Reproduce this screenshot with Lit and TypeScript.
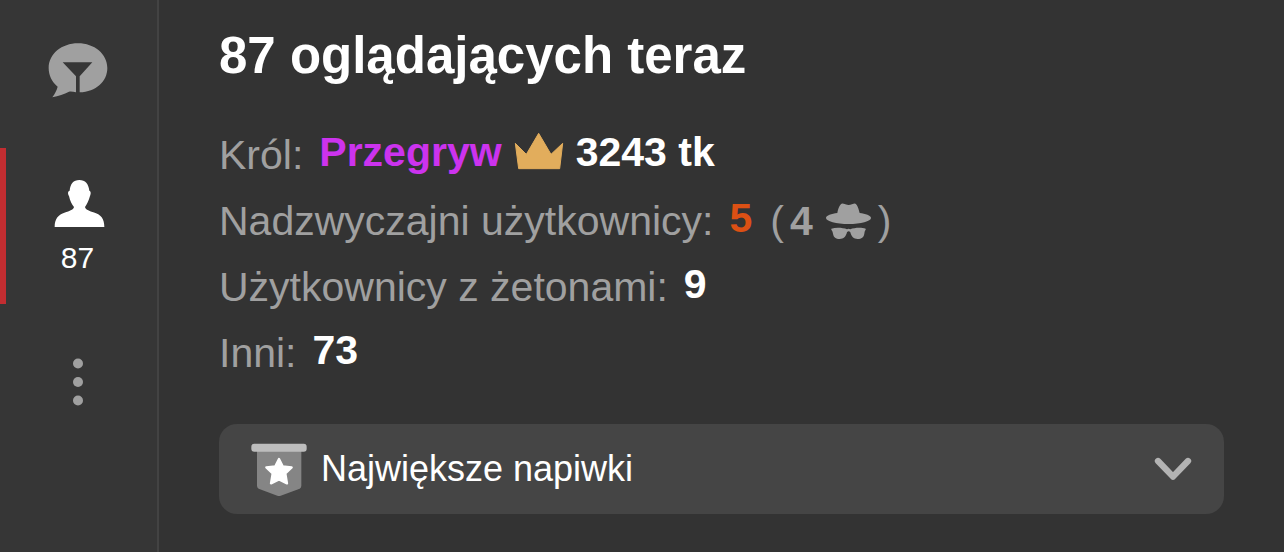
import { LitElement, html, css, svg } from "lit";
import { customElement, property } from "lit/decorators.js";

const chatIcon = html`<svg width="60" height="55" viewBox="144 68 180 165" aria-hidden="true">
  <path fill="#a0a0a0" d="M234 69C283 69 322 101 322 143C322 183 288 215 239 216V168L277 126H188L228 168V216C220 214 213 213 207 214C192 221 176 227 157 231C165 220 170 210 173 199C155 184 146 165 146 143C146 101 185 69 234 69Z"/>
</svg>`;

const personIcon = html`<svg width="54" height="49" viewBox="153 117 162 147" aria-hidden="true">
  <path fill="#fff" d="M238 120C256 120 266 132 268 152C273 153 273 161 270 168C266 184 260 193 255 201C257 209 266 212 280 217C303 224 313 236 313 261H164C164 236 175 224 197 217C211 212 220 209 222 201C216 193 210 184 207 168C203 161 203 153 209 152C211 132 220 120 238 120Z"/>
</svg>`;

const dotsIcon = html`<svg width="10" height="48" viewBox="0 0 10 48" aria-hidden="true">
  <g fill="#a0a0a0">${[5.5, 24, 42.5].map((y) => svg`<circle cx="5" cy=${y} r="5"/>`)}</g>
</svg>`;

const crownIcon = html`<svg class="crown" width="50" height="38" viewBox="36 36 150 114" role="img" aria-label="Korona">
  <path fill="#e2ad5c" stroke="#e2ad5c" stroke-width="3" stroke-linejoin="round" d="M40 70L73 103L110 40L147 103L182 70L173 146H50Z"/>
</svg>`;

const incognitoIcon = html`<svg width="47" height="39" viewBox="312 36 141 117" aria-hidden="true">
  <g fill="#a0a0a0">
    <path d="M362 41C368 40 376 45 383 45C390 45 398 40 403 41C409 43 413 57 416 69C433 71 450 76 450 84C450 94 419 102 383 102C346 102 315 94 315 84C315 76 332 71 349 69C351 57 356 43 362 41Z"/>
    <path d="M331 116C345 112 366 113 378 118Q383 115 388 118C400 113 421 112 434 116V120C431 122 431 126 430 131C428 142 422 147 410 147C398 147 391 140 388 127Q383 121 378 127C375 140 368 147 356 147C344 147 338 142 336 131C335 126 334 122 331 120Z"/>
  </g>
</svg>`;

const badgeIcon = html`<svg width="56" height="56" viewBox="123 78 168 168" aria-hidden="true">
  <path fill="#858585" d="M141 106H274V212Q274 218 269 221L212 242Q207 244 202 242L146 221Q141 218 141 212Z"/>
  <rect x="124" y="86" width="166" height="24" rx="9" fill="#bdbdbd"/>
  <path fill="#fff" stroke="#fff" stroke-width="7" stroke-linejoin="round" d="M207 132L218 154L245 157L226 175L231 205L207 193L183 205L188 175L169 157L196 154Z"/>
</svg>`;

const chevronIcon = html`<svg width="38" height="24" viewBox="102 126 114 72" aria-hidden="true">
  <path fill="none" stroke="#b3b3b3" stroke-width="19" stroke-linecap="round" stroke-linejoin="round" d="M114 138L159 185L204 138"/>
</svg>`;

@customElement("side-nav")
class SideNav extends LitElement {
  @property({ type: Number }) viewers = 0;

  static styles = css`
    :host {
      display: block;
      background: #363636;
      border-right: 2px solid #434343;
    }
    .nav {
      display: flex;
      flex-direction: column;
    }
    .item {
      display: flex;
      flex-direction: column;
      align-items: center;
      justify-content: center;
      gap: 12px;
      height: 156px;
      padding: 0 8px 0 6px;
      border: 0;
      background: none;
      color: #fff;
      font: 30px/36px "Liberation Sans", Arial, sans-serif;
      cursor: pointer;
    }
    .first {
      height: 148px;
      padding-bottom: 8px;
    }
    .active {
      border-left: 6px solid #c22d31;
      padding-top: 2px;
      padding-left: 0;
    }
  `;

  render() {
    return html`<nav class="nav">
      <button class="item first" aria-label="Czat">${chatIcon}</button>
      <button class="item active" aria-label="Oglądający: ${this.viewers}">${personIcon}<span>${this.viewers}</span></button>
      <button class="item" aria-label="Więcej">${dotsIcon}</button>
    </nav>`;
  }
}

@customElement("app-root")
class AppRoot extends LitElement {
  static styles = css`
    :host {
      display: grid;
      grid-template-columns: 159px 1fr;
      min-height: 100vh;
      background: #333;
      color: #fff;
      font-family: "Liberation Sans", Arial, sans-serif;
    }
    .main {
      padding: 24px 60px;
    }
    .title {
      margin: 0 0 34px;
      font-size: 51px;
      line-height: 64px;
      font-weight: 700;
    }
    .stats {
      margin: 0;
    }
    .row {
      display: flex;
      align-items: center;
      gap: 16px;
      height: 66px;
      font-size: 41px;
      color: #a0a0a0;
      white-space: nowrap;
    }
    .value {
      display: flex;
      align-items: center;
      gap: 12px;
      margin: 0;
    }
    .wide {
      gap: 18px;
    }
    .strong {
      padding-bottom: 6px;
      font-weight: 700;
      color: #fff;
    }
    .crown {
      padding-bottom: 8px;
    }
    .king {
      color: #cc33ee;
    }
    .special {
      color: #dc5014;
    }
    .hidden {
      display: flex;
      align-items: center;
      gap: 6px;
    }
    .count {
      display: flex;
      align-items: center;
      gap: 12px;
    }
    .tips {
      display: flex;
      align-items: center;
      gap: 14px;
      width: 100%;
      height: 90px;
      margin-top: 38px;
      padding: 0 32px;
      border: 0;
      border-radius: 18px;
      background: #454545;
      color: #fff;
      font: 36px/44px "Liberation Sans", Arial, sans-serif;
      text-align: left;
      cursor: pointer;
    }
    .grow {
      flex: 1;
    }
  `;

  render() {
    return html`
      <side-nav .viewers=${87}></side-nav>
      <main class="main">
        <h1 class="title">87 oglądających teraz</h1>
        <dl class="stats">
          <div class="row">
            <dt>Król:</dt>
            <dd class="value"><span class="strong king">Przegryw</span>${crownIcon}<span class="strong">3243 tk</span></dd>
          </div>
          <div class="row">
            <dt>Nadzwyczajni użytkownicy:</dt>
            <dd class="value wide">
              <span class="strong special">5</span>
              <span class="hidden">
                <span>(</span><span class="count"><b>4</b>${incognitoIcon}</span><span>)</span>
              </span>
            </dd>
          </div>
          <div class="row">
            <dt>Użytkownicy z żetonami:</dt>
            <dd class="value"><span class="strong">9</span></dd>
          </div>
          <div class="row">
            <dt>Inni:</dt>
            <dd class="value"><span class="strong">73</span></dd>
          </div>
        </dl>
        <button class="tips" aria-expanded="false">
          ${badgeIcon}<span class="grow">Największe napiwki</span>${chevronIcon}
        </button>
      </main>
    `;
  }
}
